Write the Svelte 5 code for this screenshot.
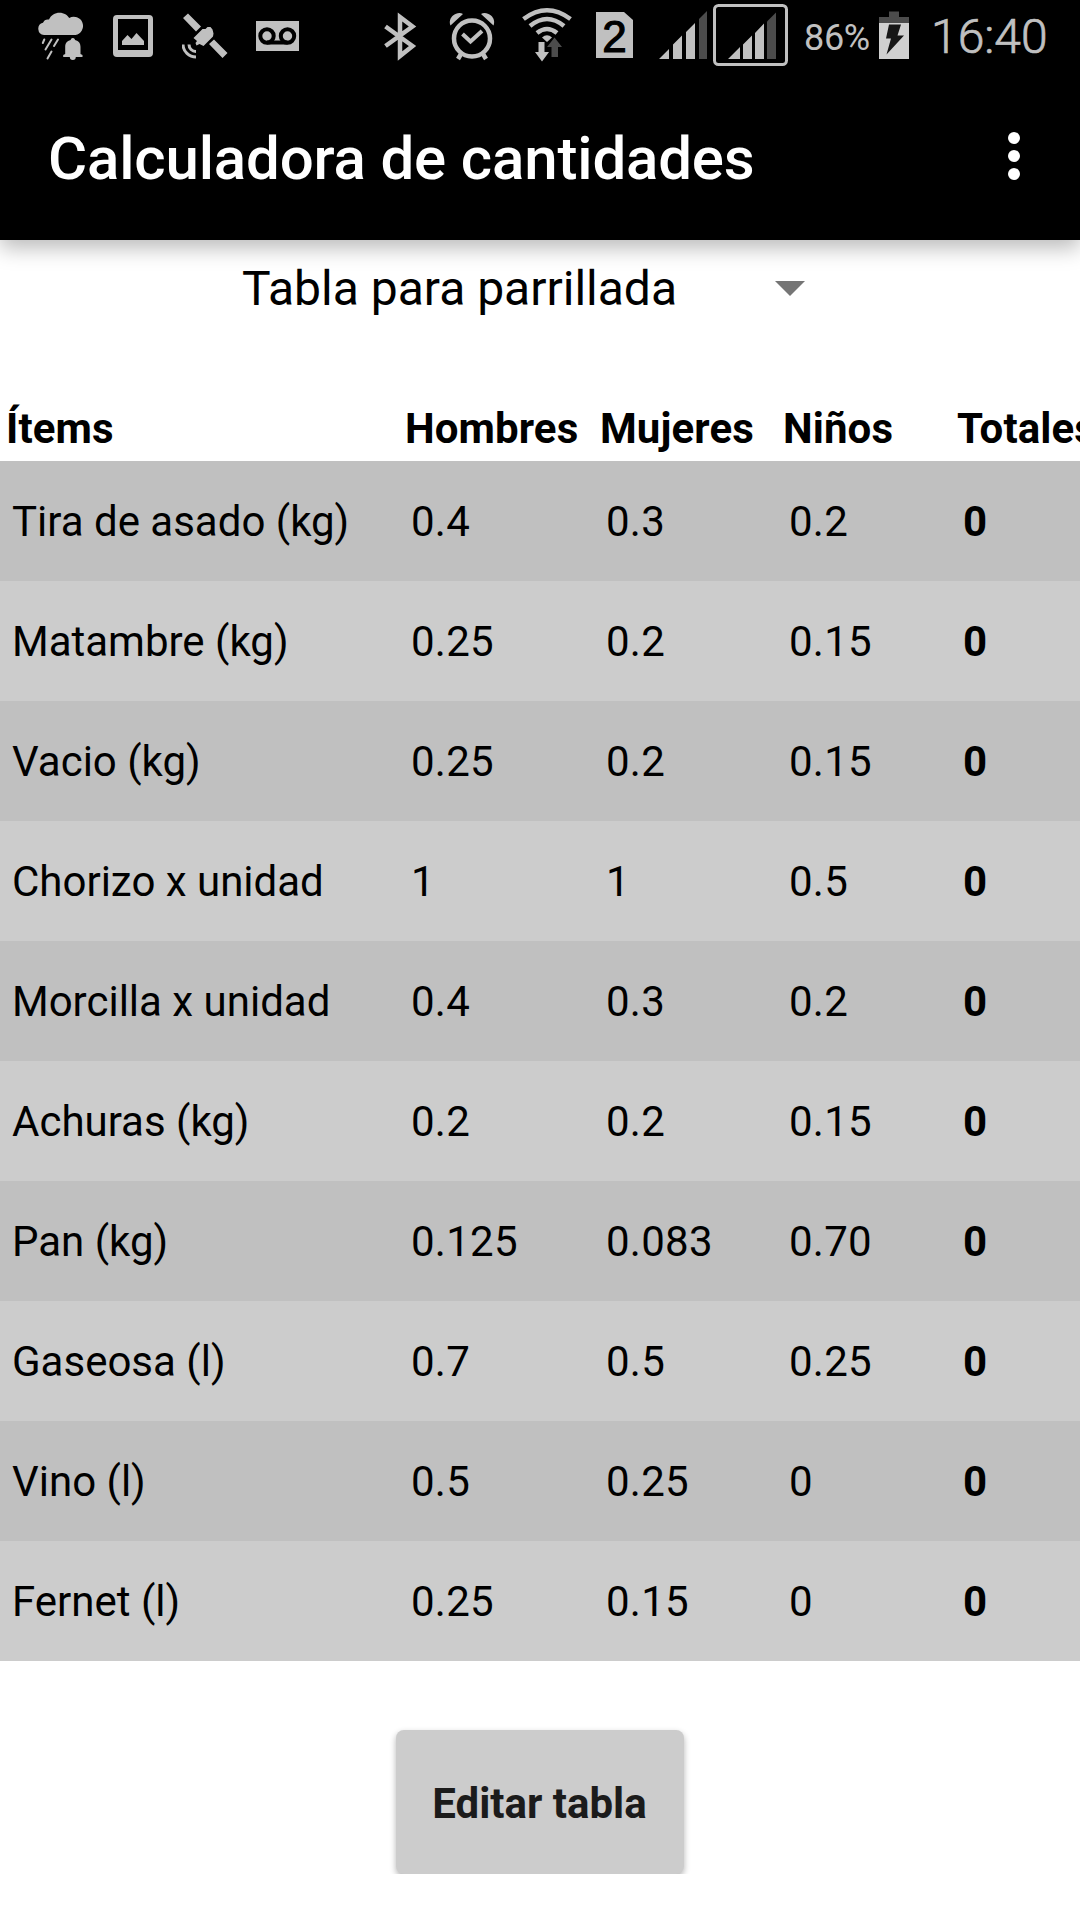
<script>
  const columns = ['Ítems', 'Hombres', 'Mujeres', 'Niños', 'Totales'];
  const rows = [
    ['Tira de asado (kg)', '0.4', '0.3', '0.2', '0'],
    ['Matambre (kg)', '0.25', '0.2', '0.15', '0'],
    ['Vacio (kg)', '0.25', '0.2', '0.15', '0'],
    ['Chorizo x unidad', '1', '1', '0.5', '0'],
    ['Morcilla x unidad', '0.4', '0.3', '0.2', '0'],
    ['Achuras (kg)', '0.2', '0.2', '0.15', '0'],
    ['Pan (kg)', '0.125', '0.083', '0.70', '0'],
    ['Gaseosa (l)', '0.7', '0.5', '0.25', '0'],
    ['Vino (l)', '0.5', '0.25', '0', '0'],
    ['Fernet (l)', '0.25', '0.15', '0', '0']
  ];
</script>

<div class="screen">
  <div class="status">
    <div class="notifications">
      <!-- weather alert -->
      <svg width="48" height="75" viewBox="0 0 48 75">
        <path d="M7 35a6.200 6.200 0 0 1-1-12.200q1.500-4 6-3.300C14 15 18 12.700 22.500 12.700c4.500 0 8 2.300 9.700 5.300A9.200 9.200 0 1 1 38.500 35Z" />
        <path class="rain" d="M7.300 39.500l-1.500 3.500M14.500 39.500l-6 10M21 39.500l-4 6.500M14.500 51.500l-4 7" />
        <path d="M35.800 38c1.700 0 2 1 2.200 2 4 1 5.500 3.500 5.500 7v7l2 1v2h-6.700a3 3 0 0 1-6 0H26.200v-2l2-1v-7c0-3.500 1.500-6 5.500-7 .2-1 .5-2 2.100-2Z" />
      </svg>
      <svg width="40" height="75" viewBox="0 0 40 75">
        <path fill-rule="evenodd" d="M4 15h32a4 4 0 0 1 4 4v34a4 4 0 0 1-4 4H4a4 4 0 0 1-4-4V19a4 4 0 0 1 4-4Zm1 4v31h30V19Z" />
        <path d="M9 45v-4l5.500-6 4 4 5-6 7.500 8v4Z" />
      </svg>
      <!-- satellite -->
      <svg width="46" height="75" viewBox="0 0 46 75">
        <path d="M1 18l5-4.500 13 13-5 5ZM27 44l5-4.500 13.500 13.500-5 5ZM11.500 38l9-9h3l2-2h3l2 2.500 1 4-.5 3-9.500 9.500-4-2-3 1.500-1-2.500 1.500-2Z" />
        <path class="arc" d="M1 44.500a13 13 0 0 0 13 12.500M7 44.500a7 7 0 0 0 7 7" />
      </svg>
      <!-- voicemail -->
      <svg width="43" height="75" viewBox="0 0 43 75">
        <path d="M0 21h43v30H0Z" />
        <g class="reel"><circle cx="11" cy="36" r="6.700" /><circle cx="31.500" cy="36" r="6.700" /><path d="M11 42.500h20.500" /></g>
      </svg>
    </div>
    <div class="system">
      <svg class="bt" width="33" height="75" viewBox="0 0 33 75">
        <path class="line" d="M1.500 26.500l27 19.500-12.500 10V17l12.500 9.500L1.500 46" />
      </svg>
      <svg class="alarm" width="46" height="75" viewBox="0 0 46 75">
        <circle class="line" cx="23" cy="38.500" r="18" />
        <path class="tick" d="M13.500 34l8 7.500 11.500-10.500" />
        <path d="M1.500 25.500C0 22 1 18 4 15.500s7-3.500 10-1.500ZM44.500 25.500C46 22 45 18 42 15.500s-7-3.500-10-1.500Z" />
        <path class="line" d="M12 54l-3 5M34 54l3 5" />
      </svg>
      <svg class="wifi" width="50" height="75" viewBox="0 0 50 75">
        <path class="wave" d="M1.500 19Q25 1.500 48.500 19M8 26Q25 12 42 26M15 33Q25 25 35 33" />
        <path d="M20 37.500q5-4.500 10 0l-5 4.500Z" />
        <path d="M16.500 42h6v10h4.500l-7 9.500-7-9.500h3.500Z" />
        <path class="dim" d="M29.500 57h6.500V47h4l-7.500-9.500L25 47h4.500Z" />
      </svg>
      <svg class="sim" width="37" height="75" viewBox="0 0 37 75">
        <path d="M0 12h28l9 8v38H0Z" />
        <text x="18.500" y="52" text-anchor="middle">2</text>
      </svg>
      <svg class="signal" width="48" height="75" viewBox="0 0 48 75">
        <path d="M0 59l10-10v10ZM14 59V44.500l9-9V59ZM27 59V32l9-9v36Z" />
        <path class="dim" d="M40 59V19l8-8v48Z" />
      </svg>
      <svg class="framed" width="75" height="75" viewBox="0 0 75 75">
        <rect class="frame" x="1.500" y="5.500" width="72" height="59" rx="4" />
        <path d="M15 59l12-12v12ZM30 59V44.500l9-9V59ZM42 59V33l9-9.500V59Z" />
        <path class="dim" d="M54 59V21.500l9-9V59Z" />
      </svg>
      <span class="percent">86%</span>
      <svg class="battery" width="30" height="75" viewBox="0 0 30 75">
        <path class="dim" d="M10 11.500h10V17h10v7H0v-7h10Z" />
        <path class="charge" d="M0 23h30v36H0Z" />
        <path class="bolt" d="M10 24.500h12l-3.500 11H25L7.500 54.500l4.500-16H7Z" />
      </svg>
      <span class="clock">16:40</span>
    </div>
  </div>

  <header>
    <h1>Calculadora de cantidades</h1>
    <svg class="more" width="12" height="48" viewBox="0 0 12 48">
      <circle cx="6" cy="6" r="6" /><circle cx="6" cy="24" r="6" /><circle cx="6" cy="42" r="6" />
    </svg>
  </header>

  <div class="spinner">
    <span>Tabla para parrillada</span>
    <svg width="30" height="15" viewBox="0 0 30 15"><path d="M0 0h30L15 15Z" /></svg>
  </div>

  <div class="row head">
    {#each columns as name}<span>{name}</span>{/each}
  </div>
  {#each rows as row, i}
    <div class="row item" class:dark={i % 2 === 0}>
      {#each row as cell}<span>{cell}</span>{/each}
    </div>
  {/each}

  <div class="actions"><button>Editar tabla</button></div>
</div>

<style>
  :global(body) { background: #fff; }
  .screen {
    width: 1080px;
    height: 1920px;
    overflow: hidden;
    background: #fff;
    color: #000;
    font-family: Roboto, sans-serif;
  }
  svg { display: block; flex: none; }
  .status {
    display: flex;
    justify-content: space-between;
    height: 75px;
    padding: 0 31px 0 37px;
    background: #000;
    color: #c0c0c0;
    box-sizing: border-box;
  }
  .status svg { fill: #c0c0c0; }
  .notifications, .system { display: flex; }
  .notifications svg:nth-child(2) { margin-left: 28px; }
  .notifications svg:nth-child(3) { margin-left: 29px; }
  .notifications svg:nth-child(4) { margin-left: 28px; }
  .status .rain { fill: none; stroke: #c0c0c0; stroke-width: 2; stroke-linecap: round; }
  .status .arc { fill: none; stroke: #c0c0c0; stroke-width: 3; }
  .reel { fill: none; stroke: #000; stroke-width: 4; }
  .line { fill: none; stroke: #c0c0c0; stroke-width: 4.5; }
  .tick { fill: none; stroke: #c0c0c0; stroke-width: 4; }
  .wave { fill: none; stroke: #c0c0c0; stroke-width: 4.5; }
  .dim { fill: #4c4c4c; }
  .frame { fill: none; stroke: #c0c0c0; stroke-width: 3; }
  .charge { fill: #d0d0d0; }
  .bolt { fill: #161616; }
  .sim text { fill: #000; font: 400 44px "Liberation Sans", sans-serif; stroke: #000; stroke-width: 1.2; }
  .alarm { margin-left: 32px; }
  .wifi { margin-left: 27px; }
  .sim { margin-left: 24px; }
  .signal { margin-left: 26px; }
  .framed { margin-left: 6px; }
  .percent { width: 67px; margin-left: 16px; font-size: 36px; line-height: 76px; letter-spacing: -0.3px; }
  .battery { margin-left: 8px; }
  .clock {
    width: 118px;
    margin-left: 22px;
    font-size: 48px;
    line-height: 74px;
    font-weight: 300;
    -webkit-text-stroke: 0.7px #c0c0c0;
  }
  header {
    display: flex;
    align-items: center;
    justify-content: space-between;
    height: 165px;
    padding: 0 60px 0 48px;
    box-sizing: border-box;
    background: #000;
    color: #fff;
    box-shadow: 0 8px 20px rgba(0, 0, 0, 0.27);
  }
  h1 { margin: 3px 0 0; font-size: 60px; font-weight: 500; line-height: 70px; letter-spacing: -0.16px; }
  .more { fill: #fff; margin-bottom: 3px; }
  .spinner {
    display: flex;
    align-items: center;
    height: 96px;
    padding-left: 242px;
    font-size: 48px;
  }
  .spinner span { width: 533px; }
  .spinner svg { fill: #757575; }
  .row {
    display: grid;
    grid-template-columns: 399px 195px 183px 174px 1fr;
    padding-left: 6px;
    font-size: 42px;
    white-space: nowrap;
  }
  .head { height: 57px; margin-top: 68px; line-height: 49px; font-weight: 700; letter-spacing: 0.1px; }
  .item { height: 120px; padding-left: 12px; line-height: 122px; background: #ccc; }
  .dark { background: #c0c0c0; }
  .item span:not(:first-child) { letter-spacing: 0.25px; }
  .item span:last-child { font-weight: 700; }
  .actions {
    display: flex;
    justify-content: center;
    height: 144px;
    padding-top: 69px;
    overflow: hidden;
  }
  button {
    width: 288px;
    height: 144px;
    padding: 2px 1px 0 0;
    border: 0;
    border-radius: 8px;
    background: #ccc;
    color: #1b1b1b;
    font: 700 42px Roboto, sans-serif;
    box-shadow: 0 3px 6px rgba(0, 0, 0, 0.3);
  }
</style>
